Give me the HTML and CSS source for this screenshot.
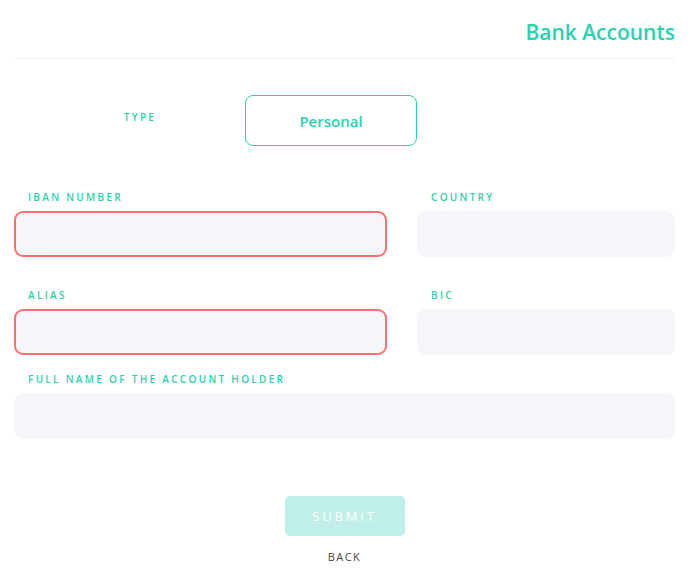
FILE: index.html
```html
<!DOCTYPE html>
<html lang="en">
<head>
    <meta charset="UTF-8">
    <meta name="viewport" content="width=device-width, initial-scale=1.0">
    <title>Bank Accounts</title>
    <link rel="stylesheet" href="styles.css">
</head>
<body>

<div class="page">
    <header>
        <h1>Bank Accounts</h1>
    </header>

    <form class="account-form" onsubmit="return false;">
        <!-- Tipo de cuenta -->
        <div class="type-row">
            <span class="field-label type-label">Type</span>
            <button type="button" class="type-option">Personal</button>
        </div>

        <div class="fields">
            <div class="field">
                <label class="field-label" for="iban">Iban number</label>
                <input type="text" id="iban" class="input error">
            </div>
            <div class="field">
                <label class="field-label" for="country">Country</label>
                <input type="text" id="country" class="input">
            </div>
            <div class="field">
                <label class="field-label" for="alias">Alias</label>
                <input type="text" id="alias" class="input error">
            </div>
            <div class="field">
                <label class="field-label" for="bic">BIC</label>
                <input type="text" id="bic" class="input">
            </div>
            <div class="field wide">
                <label class="field-label" for="holder">Full name of the account holder</label>
                <input type="text" id="holder" class="input">
            </div>
        </div>

        <div class="actions">
            <button type="submit" class="btn-submit" disabled>Submit</button>
            <a href="#" class="btn-back">Back</a>
        </div>
    </form>
</div>

</body>
</html>
```

FILE: styles.css
```css
body {
    font-family: "Open Sans", Arial, sans-serif;
    margin: 0;
    padding: 0;
    background-color: white;
}

.page {
    padding: 0 25px 0 14px;
}

header {
    border-bottom: 1px solid #eef0f5;
    padding: 17px 0 11px;
    text-align: right;
}

header h1 {
    margin: 0;
    font-size: 21px;
    font-weight: 600;
    line-height: 30px;
    color: #2ad2ae;
}

.field-label {
    display: block;
    font-size: 10px;
    font-weight: 600;
    letter-spacing: 2.3px;
    text-transform: uppercase;
    color: #2ad2ae;
}

.type-row {
    display: flex;
    align-items: center;
    margin-top: 36px;
}

.type-label {
    box-sizing: border-box;
    width: 231px;
    padding-left: 21px;
    text-align: center;
    margin-bottom: 8px;
}

.type-option {
    width: 172px;
    height: 51px;
    background-color: white;
    border: 1px solid #2ad2ae;
    border-radius: 8px;
    font-family: inherit;
    font-size: 15px;
    font-weight: 600;
    color: #2ad2ae;
    cursor: pointer;
}

.fields {
    display: grid;
    grid-template-columns: 373px 1fr;
    column-gap: 30px;
    row-gap: 31px;
    margin-top: 44px;
}

.field .field-label {
    padding-left: 14px;
    margin-bottom: 7px;
    line-height: 14px;
}

.field.wide {
    grid-column: 1 / 3;
    margin-top: -14px;
}

.input {
    display: block;
    box-sizing: border-box;
    width: 100%;
    height: 46px;
    background-color: #f5f6fa;
    border: 1px solid #f5f6fa;
    border-radius: 9px;
    padding: 0 14px;
    font-family: inherit;
    font-size: 15px;
    outline: none;
}

.input.error {
    border: 2px solid #ff6f6f;
}

.actions {
    display: flex;
    flex-direction: column;
    align-items: center;
    margin-top: 57px;
}

.btn-submit {
    width: 120px;
    height: 40px;
    background-color: #c0efe7;
    border: none;
    border-radius: 5px;
    color: white;
    font-family: inherit;
    font-size: 13px;
    font-weight: 400;
    letter-spacing: 2.8px;
    text-transform: uppercase;
}

.btn-back {
    margin-top: 13px;
    font-size: 11px;
    font-weight: 400;
    letter-spacing: 1.5px;
    text-transform: uppercase;
    text-decoration: none;
    color: #444;
}
```
